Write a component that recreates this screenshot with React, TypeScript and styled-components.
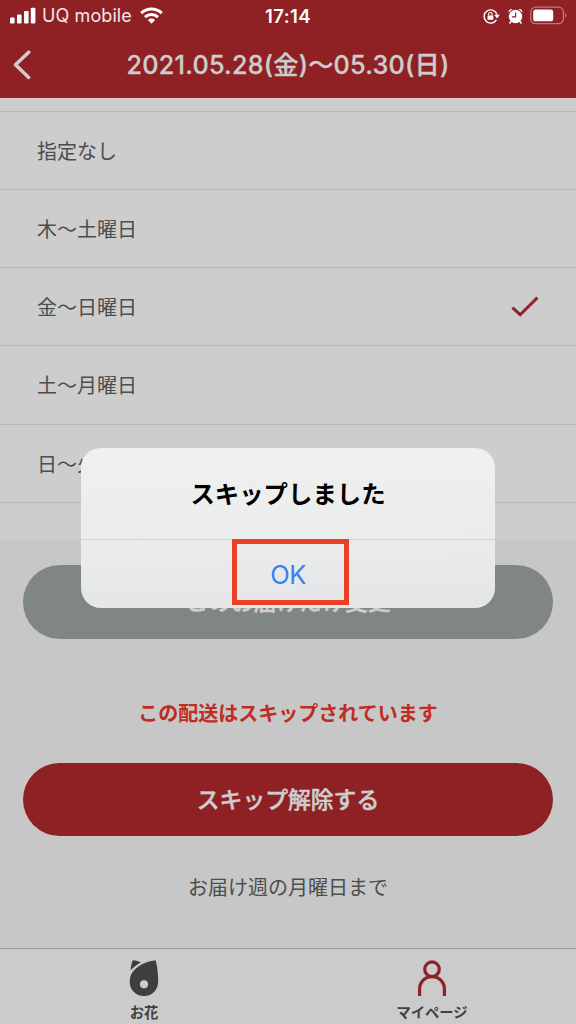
import React from "react";
import styled, { createGlobalStyle } from "styled-components";

const Global = createGlobalStyle`
  * { box-sizing: border-box; }
  body {
    margin: 0;
    background: #c7c7c7;
    font-family: Inter, "Noto Sans CJK JP", sans-serif;
    color: #4b4e4d;
  }
  button { font-family: inherit; border: 0; padding: 0; }
`;

const Screen = styled.div`
  position: relative;
  width: 576px;
  height: 1024px;
  overflow: hidden;
  display: flex;
  flex-direction: column;
`;

const Header = styled.header`
  height: 98px;
  flex: none;
  background: #8f2124;
`;

const StatusBar = styled.div`
  height: 32px;
  display: grid;
  grid-template-columns: 1fr auto 1fr;
  align-items: center;
  padding: 0 8px 0 10px;
  color: #fff;
`;

const StatusGroup = styled.div<{ $end?: boolean }>`
  display: flex;
  align-items: center;
  justify-content: ${(p) => (p.$end ? "flex-end" : "flex-start")};
`;

const Carrier = styled.span`
  font-size: 18px;
  line-height: 32px;
  letter-spacing: 0.1px;
  margin: 0 8px 0 6px;
  color: #f3e6e6;
`;

const Clock = styled.span`
  font-size: 18.5px;
  font-weight: 600;
  line-height: 32px;
  letter-spacing: 0.4px;
  position: relative;
  left: -1px;
`;

const NavBar = styled.div`
  height: 66px;
  display: grid;
  grid-template-columns: 60px 1fr 60px;
  align-items: center;
`;

const BackButton = styled.button`
  background: none;
  height: 66px;
  padding-left: 12px;
  display: flex;
  align-items: center;
`;

const Title = styled.h1`
  margin: 0;
  font-size: 25.2px;
  line-height: 66px;
  font-weight: 500;
  letter-spacing: 0.23px;
  text-align: center;
  white-space: nowrap;
  color: #cdcdcd;
  -webkit-text-stroke: 0.3px #cdcdcd;
`;

const DayList = styled.ul`
  list-style: none;
  margin: 0;
  padding: 12.500px 0 0;
  height: 442px;
  flex: none;
  background: #cdcdcd;
`;

const DayRow = styled.li`
  height: 78.25px;
  padding: 3px 37px 0;
  display: flex;
  align-items: center;
  justify-content: space-between;
  border-top: 1.5px solid #b9b9b9;
  font-size: 20px;
  line-height: 30px;
  &:last-child { border-bottom: 1.5px solid #b9b9b9; height: 79.25px; }
`;

const CheckMark = styled.svg`
  margin-bottom: 2px;
`;

const Actions = styled.main`
  flex: 1;
  padding: 25px 23px 0;
  display: flex;
  flex-direction: column;
  align-items: stretch;
  text-align: center;
`;

const PillButton = styled.button<{ $tone: string }>`
  height: 73.5px;
  flex: none;
  border-radius: 37px;
  background: ${(p) => p.$tone};
  color: #cdcdcd;
  font-size: 22.8px;
  font-weight: 500;
  padding-bottom: 2px;
  -webkit-text-stroke: 0.5px #cdcdcd;
`;

const SkipNotice = styled.p`
  margin: 59px 0 33px;
  font-size: 20px;
  line-height: 32px;
  font-weight: 700;
  color: #bf2c22;
`;

const Deadline = styled.p`
  margin: 36px 0 0;
  font-size: 20px;
  line-height: 32px;
`;

const TabBar = styled.nav`
  height: 76px;
  flex: none;
  display: grid;
  grid-template-columns: 1fr 1fr;
  background: #cbcbcb;
  border-top: 1px solid #999;
`;

const Tab = styled.a`
  display: flex;
  flex-direction: column;
  align-items: center;
  padding-top: 10px;
  font-size: 14.3px;
  line-height: 20px;
  font-weight: 600;
  gap: 6px;
  color: #3f4241;
`;

const Alert = styled.div`
  position: absolute;
  left: 81px;
  top: 447.5px;
  width: 414px;
  height: 160.5px;
  border-radius: 20px;
  overflow: hidden;
  background: linear-gradient(178deg, #f0f0f0 0%, #ebecec 55%, #e3e5e6 100%);
  display: flex;
  flex-direction: column;
`;

const AlertMessage = styled.p`
  margin: 0;
  height: 91.5px;
  line-height: 92px;
  text-align: center;
  font-size: 24.4px;
  font-weight: 700;
  color: #000;
`;

const AlertAction = styled.button`
  flex: 1;
  border-top: 1.5px solid #cfd1d1;
  background: none;
  font-size: 25.5px;
  color: #3a7df6;
  letter-spacing: -0.6px;
`;

const Highlight = styled.div`
  position: absolute;
  left: 231.5px;
  top: 539px;
  width: 117.5px;
  height: 66px;
  border: 5.5px solid #ea4025;
`;

const days = ["指定なし", "木〜土曜日", "金〜日曜日", "土〜月曜日", "日〜火曜日"];

const SignalIcon = () => (
  <svg width="26" height="17" viewBox="0 0 26 17" fill="#fff" transform="translate(0 -1)">
    <rect x="0" y="10.5" width="4.6" height="6" rx="1" />
    <rect x="7" y="7.5" width="4.6" height="9" rx="1" />
    <rect x="14" y="4" width="4.6" height="12.5" rx="1" />
    <rect x="20.8" y="0.7" width="4.6" height="15.8" rx="1" />
  </svg>
);

const WifiIcon = () => (
  <svg width="23" height="17" viewBox="0 0 23 17" fill="none" stroke="#fff" strokeWidth="3" transform="translate(0 -1)">
    <path d="M1.2 6.1a14.8 14.8 0 0 1 20.6 0" />
    <path d="M5 10.2a9.4 9.4 0 0 1 13 0" />
    <path d="M7.9 13a5.2 5.2 0 0 1 7.2 0L11.5 16.8Z" fill="#fff" stroke="none" />
  </svg>
);

const RotationLockIcon = () => (
  <svg width="17" height="17" viewBox="0 0 17 17" fill="none" stroke="#fff" strokeWidth="1.4">
    <path d="M13.4 11.8A6.6 6.6 0 1 1 14 6.5" />
    <path d="M11.2 6.8h5.6L14 10.4Z" fill="#fff" stroke="none" />
    <rect x="4.5" y="7.4" width="5.8" height="4.4" rx="0.6" fill="#fff" stroke="none" />
    <path d="M5.7 7.6V6.2a1.7 1.7 0 0 1 3.4 0v1.400" strokeWidth="1.1" />
  </svg>
);

const AlarmIcon = () => (
  <svg width="15" height="17" viewBox="0 0 15 17">
    <circle cx="7.5" cy="8.5" r="6.7" fill="#fff" />
    <path d="M.6 4.6A3 3 0 0 1 4.5 1.1ZM14.4 4.6a3 3 0 0 0-3.9-3.5Z" fill="#fff" />
    <path d="M3 13.5 1.5 15.4M12 13.5l1.5 1.9" stroke="#fff" strokeWidth="1.6" />
    <path d="M7.6 4.4v4.5H4" fill="none" stroke="#8f2124" strokeWidth="1.1" />
  </svg>
);

const BatteryIcon = () => (
  <svg width="38" height="19" viewBox="0 0 38 19" transform="translate(0 -1)">
    <rect x="0.8" y="1.2" width="32.6" height="16.4" rx="4.8" fill="none" stroke="#b9797b" strokeWidth="1.3" />
    <rect x="3.2" y="3.5" width="20" height="11.8" rx="2.6" fill="#fff" />
    <path d="M35.2 6.8c1.7.8 1.7 4.4 0 5.2Z" fill="#b9797b" />
  </svg>
);

export default function App() {
  return (
    <>
      <Global />
      <Screen>
        <Header>
          <StatusBar>
            <StatusGroup>
              <SignalIcon />
              <Carrier>UQ mobile</Carrier>
              <WifiIcon />
            </StatusGroup>
            <Clock>17:14</Clock>
            <StatusGroup $end>
              <RotationLockIcon />
              <svg width="8" height="1" />
              <AlarmIcon />
              <svg width="7" height="1" />
              <BatteryIcon />
            </StatusGroup>
          </StatusBar>
          <NavBar>
            <BackButton aria-label="戻る">
              <svg width="20" height="30" viewBox="0 0 20 30" fill="none" stroke="#cdcdcd" strokeWidth="3.5" strokeLinecap="round" strokeLinejoin="round">
                <path d="M16.7 2.2 3.5 14.8 16.7 27.4" />
              </svg>
            </BackButton>
            <Title>2021.05.28(金)〜05.30(日)</Title>
          </NavBar>
        </Header>
        <DayList>
          {days.map((day, i) => (
            <DayRow key={day}>
              {day}
              {i === 2 && (
                <CheckMark width="28" height="22" viewBox="0 0 28 22" fill="none" stroke="#92212a" strokeWidth="3">
                  <path d="M1.4 11.7 9.2 18.7 26.4 1.6" />
                </CheckMark>
              )}
            </DayRow>
          ))}
        </DayList>
        <Actions>
          <PillButton $tone="#808685">このお届けだけ変更</PillButton>
          <SkipNotice>この配送はスキップされています</SkipNotice>
          <PillButton $tone="#8f2124">スキップ解除する</PillButton>
          <Deadline>お届け週の月曜日まで</Deadline>
        </Actions>
        <TabBar>
          <Tab>
            <svg width="30" height="38" viewBox="0 0 30 38" fill="#3c3f3e">
              <path
                fillRule="evenodd"
                d="M26.500 1.200C28 5 29.200 14 29.200 22.500C29.200 31 23 37 15 37S.8 31 .8 23.500C.8 18 2 15 3.800 12.700C8.500 7 16 2.500 26.500 1.200ZM15 21.200a4.100 4.100 0 1 0 0 8.200 4.100 4.100 0 0 0 0-8.200Z"
              />
              <path d="M3.800 1.200C7 1.500 9.500 2.300 12 3.500C8 5.500 4.500 8 1.600 11.400C1.700 8 2.500 4.500 3.800 1.200Z" />
            </svg>
            お花
          </Tab>
          <Tab>
            <svg width="30" height="38" viewBox="0 0 30 38" fill="none" stroke="#92212a" strokeWidth="3.200">
              <circle cx="15" cy="10.200" r="7.300" />
              <path d="M2.600 37V30a12.400 12.400 0 0 1 24.800 0V37" />
            </svg>
            マイページ
          </Tab>
        </TabBar>
        <Alert role="alertdialog">
          <AlertMessage>スキップしました</AlertMessage>
          <AlertAction>OK</AlertAction>
        </Alert>
        <Highlight />
      </Screen>
    </>
  );
}
